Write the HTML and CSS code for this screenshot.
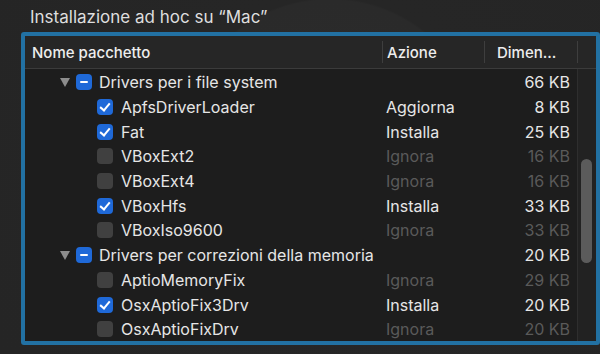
FILE: index.html
```html
<!DOCTYPE html>
<html lang="it">
  <head>
    <meta charset="UTF-8" />
    <title>Installazione ad hoc</title>
    <link rel="stylesheet" href="styles.css">
  </head>
  <body>
    <h1 class="title">Installazione ad hoc su “Mac”</h1>
    <div class="frame">
      <div class="head">
        <div class="hcell name">Nome pacchetto</div>
        <div class="hcell action">Azione</div>
        <div class="hcell size">Dimen...</div>
        <div class="hcell corner"></div>
      </div>
      <div class="body">
        <div class="rows">
          <div class="row group">
            <div class="cell name"><span class="tri"></span><span class="box mixed"></span>Drivers per i file system</div>
            <div class="cell action"></div>
            <div class="cell size">66 KB</div>
          </div>
          <div class="row">
            <div class="cell name"><span class="box checked"></span>ApfsDriverLoader</div>
            <div class="cell action">Aggiorna</div>
            <div class="cell size">8 KB</div>
          </div>
          <div class="row">
            <div class="cell name"><span class="box checked"></span>Fat</div>
            <div class="cell action">Installa</div>
            <div class="cell size">25 KB</div>
          </div>
          <div class="row off">
            <div class="cell name"><span class="box"></span>VBoxExt2</div>
            <div class="cell action">Ignora</div>
            <div class="cell size">16 KB</div>
          </div>
          <div class="row off">
            <div class="cell name"><span class="box"></span>VBoxExt4</div>
            <div class="cell action">Ignora</div>
            <div class="cell size">16 KB</div>
          </div>
          <div class="row">
            <div class="cell name"><span class="box checked"></span>VBoxHfs</div>
            <div class="cell action">Installa</div>
            <div class="cell size">33 KB</div>
          </div>
          <div class="row off">
            <div class="cell name"><span class="box"></span>VBoxIso9600</div>
            <div class="cell action">Ignora</div>
            <div class="cell size">33 KB</div>
          </div>
          <div class="row group">
            <div class="cell name"><span class="tri"></span><span class="box mixed"></span>Drivers per correzioni della memoria</div>
            <div class="cell action"></div>
            <div class="cell size">20 KB</div>
          </div>
          <div class="row off">
            <div class="cell name"><span class="box"></span>AptioMemoryFix</div>
            <div class="cell action">Ignora</div>
            <div class="cell size">29 KB</div>
          </div>
          <div class="row">
            <div class="cell name"><span class="box checked"></span>OsxAptioFix3Drv</div>
            <div class="cell action">Installa</div>
            <div class="cell size">20 KB</div>
          </div>
          <div class="row off">
            <div class="cell name"><span class="box"></span>OsxAptioFixDrv</div>
            <div class="cell action">Ignora</div>
            <div class="cell size">20 KB</div>
          </div>
        </div>
        <div class="track"><div class="thumb"></div></div>
      </div>
    </div>
  </body>
</html>
```
FILE: styles.css
```css
/* Finestra */
body {
  margin: 0;
  height: 354px;
  overflow: hidden;
  font-family: "Inter", "Liberation Sans", sans-serif;
  background: radial-gradient(circle at 330px 150px, #2c2c2c 0, #2a2a2a 150px, #262626 152px, #252525 100%);
  color: #e6e6e6;
}

.title {
  margin: 0;
  padding: 7px 0 0 30px;
  height: 25px;
  font-size: 17px;
  font-weight: 400;
  color: #dedede;
}

/* Tabella con anello di focus */
.frame {
  margin-left: 21px;
  width: 571px;
  height: 305px;
  border: 4px solid #2271a3;
  border-radius: 3px;
  background: #1d1d1d;
  display: flex;
  flex-direction: column;
  overflow: hidden;
}

.head {
  display: flex;
  height: 33px;
  flex-shrink: 0;
  background: #262626;
  border-bottom: 1px solid #3b3b3b;
  box-sizing: border-box;
  font-size: 15px;
  font-weight: 500;
  color: #ededed;
}

.hcell {
  display: flex;
  align-items: center;
  box-sizing: border-box;
  position: relative;
}

.hcell.name { width: 357px; padding-left: 7px; }
.hcell.action { width: 102px; padding-left: 5px; }
.hcell.size { width: 93px; padding-left: 13px; }
.hcell.corner { flex: 1; }

.hcell + .hcell::before {
  content: "";
  position: absolute;
  left: 0;
  top: 5px;
  bottom: 5px;
  width: 1px;
  background: #3e3e3e;
}

.body {
  display: flex;
  flex: 1;
  min-height: 0;
}

.rows {
  width: 552px;
  overflow: hidden;
  padding-top: 1px;
  font-size: 16px;
}

.row {
  display: flex;
  height: 24.7px;
  align-items: center;
}

.cell {
  display: flex;
  align-items: center;
  box-sizing: border-box;
  white-space: nowrap;
}

.cell.name { width: 357px; padding-left: 72px; }
.cell.action { width: 102px; padding-left: 4px; }
.cell.size { width: 93px; justify-content: flex-end; padding-right: 7px; }

.group .cell.name { padding-left: 35px; }

.off .cell.action,
.off .cell.size { color: #5a5a5a; }

/* Triangolo e caselle */
.tri {
  width: 0;
  height: 0;
  border-left: 5px solid transparent;
  border-right: 5px solid transparent;
  border-top: 9px solid #8d8d8d;
  margin-right: 6px;
}

.box {
  width: 16px;
  height: 16px;
  border-radius: 4px;
  background: #404040;
  margin-right: 8px;
  position: relative;
  flex-shrink: 0;
}

.group .box { margin-right: 7px; }

.box.checked,
.box.mixed {
  background: #1f69d8;
}

.box.checked::after {
  content: "";
  position: absolute;
  left: 5px;
  top: 2px;
  width: 4px;
  height: 8px;
  border-right: 2px solid #fff;
  border-bottom: 2px solid #fff;
  transform: rotate(40deg);
}

.box.mixed::after {
  content: "";
  position: absolute;
  left: 4px;
  top: 7px;
  width: 8px;
  height: 2px;
  border-radius: 1px;
  background: #fff;
}

/* Barra di scorrimento */
.track {
  flex: 1;
  background: #222;
  border-left: 1px solid #2e2e2e;
  padding: 90px 0 0 3px;
}

.thumb {
  width: 11px;
  height: 104px;
  border-radius: 6px;
  background: #5b5b5b;
}
```
